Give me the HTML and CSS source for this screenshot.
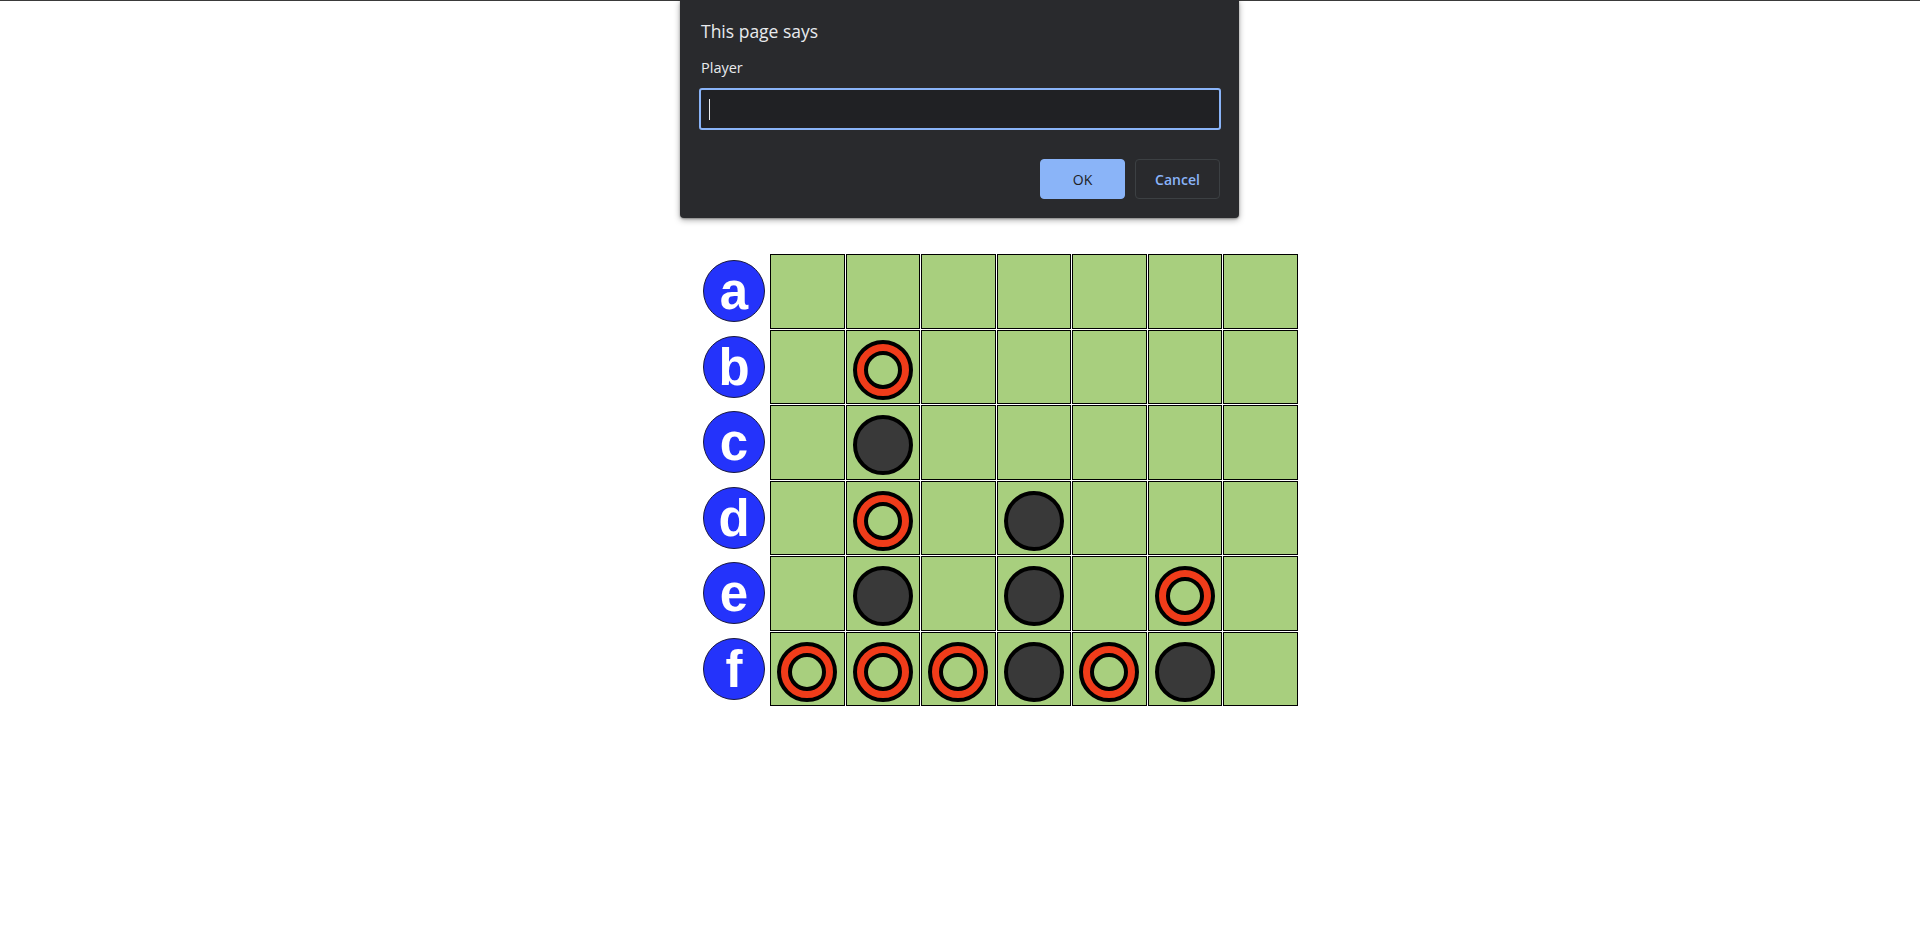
FILE: index.html
```html
<!DOCTYPE html>
<html>
<head>
<meta charset="utf-8">
<title>Board</title>
<link rel="stylesheet" href="styles.css">
</head>
<body>
<div class="topline"></div>

<div class="dialog">
  <div class="dialog-title">This page says</div>
  <div class="dialog-msg">Player</div>
  <div class="dialog-input"><span class="caret"></span></div>
  <div class="dialog-buttons">
    <button class="btn btn-ok">OK</button>
    <button class="btn btn-cancel">Cancel</button>
  </div>
</div>

<main class="game">
  <div class="board">
    <div class="label"><span class="circle">a</span></div>
    <div class="cell"></div><div class="cell"></div><div class="cell"></div><div class="cell"></div><div class="cell"></div><div class="cell"></div><div class="cell"></div>

    <div class="label"><span class="circle">b</span></div>
    <div class="cell"></div><div class="cell"><span class="ring"></span></div><div class="cell"></div><div class="cell"></div><div class="cell"></div><div class="cell"></div><div class="cell"></div>

    <div class="label"><span class="circle">c</span></div>
    <div class="cell"></div><div class="cell"><span class="disc"></span></div><div class="cell"></div><div class="cell"></div><div class="cell"></div><div class="cell"></div><div class="cell"></div>

    <div class="label"><span class="circle">d</span></div>
    <div class="cell"></div><div class="cell"><span class="ring"></span></div><div class="cell"></div><div class="cell"><span class="disc"></span></div><div class="cell"></div><div class="cell"></div><div class="cell"></div>

    <div class="label"><span class="circle">e</span></div>
    <div class="cell"></div><div class="cell"><span class="disc"></span></div><div class="cell"></div><div class="cell"><span class="disc"></span></div><div class="cell"></div><div class="cell"><span class="ring"></span></div><div class="cell"></div>

    <div class="label"><span class="circle">f</span></div>
    <div class="cell"><span class="ring"></span></div><div class="cell"><span class="ring"></span></div><div class="cell"><span class="ring"></span></div><div class="cell"><span class="disc"></span></div><div class="cell"><span class="ring"></span></div><div class="cell"><span class="disc"></span></div><div class="cell"></div>
  </div>
</main>
</body>
</html>
```

FILE: styles.css
```css
html, body {
  margin: 0;
  padding: 0;
  background: #ffffff;
  font-family: "Liberation Sans", Arial, sans-serif;
}

.topline {
  height: 1px;
  background: #3a3a3a;
}

/* ---------- prompt dialog (overlay) ---------- */
.dialog {
  position: absolute;
  left: 680px;
  top: 0;
  width: 559px;
  height: 218px;
  box-sizing: border-box;
  padding: 19px 18px 0 21px;
  background: #292a2d;
  border-radius: 0 0 4px 4px;
  box-shadow: 0 2px 6px rgba(0, 0, 0, 0.35), 0 1px 2px rgba(0, 0, 0, 0.3);
  font-family: "Open Sans", "Noto Sans", sans-serif;
  color: #e8eaed;
}

.dialog-title {
  font-size: 17.5px;
  line-height: 24px;
  height: 24px;
}

.dialog-msg {
  margin-top: 15px;
  font-size: 14.5px;
  line-height: 20px;
  height: 20px;
}

.dialog-input {
  margin-top: 10px;
  margin-left: -2px;
  height: 42px;
  box-sizing: border-box;
  border: 2px solid #8ab4f8;
  border-radius: 3px;
  background: #202124;
  display: flex;
  align-items: center;
  padding-left: 8px;
}

.caret {
  width: 1px;
  height: 21px;
  background: #e8eaed;
}

.dialog-buttons {
  margin-top: 29px;
  display: flex;
  justify-content: flex-end;
  gap: 10px;
  padding-right: 1px;
}

.btn {
  width: 85px;
  height: 40px;
  box-sizing: border-box;
  border-radius: 4px;
  font-family: "Open Sans", "Noto Sans", sans-serif;
  font-size: 14px;
  padding: 0;
}

.btn-ok {
  background: #8ab4f8;
  border: 1px solid #8ab4f8;
  color: #202124;
}

.btn-cancel {
  background: #292a2d;
  border: 1px solid #3c4043;
  color: #8ab4f8;
  font-weight: 600;
}

/* ---------- game board ---------- */
.game {
  padding-top: 253px;
  padding-left: 703px;
}

.board {
  display: grid;
  grid-template-columns: 66px repeat(7, 74.5px);
  grid-auto-rows: 74.5px;
  column-gap: 1px;
  row-gap: 1px;
}

.label {
  display: flex;
  align-items: center;
  justify-content: flex-start;
}

.circle {
  width: 60px;
  height: 58px;
  padding-top: 2px;
  border: 1px solid #1a1a40;
  border-radius: 50%;
  background: #2433fb;
  color: #ffffff;
  font-family: "Liberation Sans", Arial, sans-serif;
  font-weight: bold;
  font-size: 51px;
  line-height: 58px;
  display: flex;
  align-items: center;
  justify-content: center;
}

.cell {
  box-sizing: border-box;
  border: 1px solid #000000;
  background: #a8cf7e;
  display: flex;
  align-items: center;
  justify-content: center;
  padding-top: 6px;
}

.ring {
  width: 60px;
  height: 60px;
  box-sizing: border-box;
  border-radius: 50%;
  border: 4px solid #000000;
  background: #f03c1a;
  display: flex;
  align-items: center;
  justify-content: center;
}

.ring::after {
  content: "";
  width: 30px;
  height: 30px;
  border-radius: 50%;
  border: 4px solid #000000;
  background: #a8cf7e;
}

.disc {
  width: 60px;
  height: 60px;
  box-sizing: border-box;
  border-radius: 50%;
  border: 4px solid #000000;
  background: #393939;
}
```
